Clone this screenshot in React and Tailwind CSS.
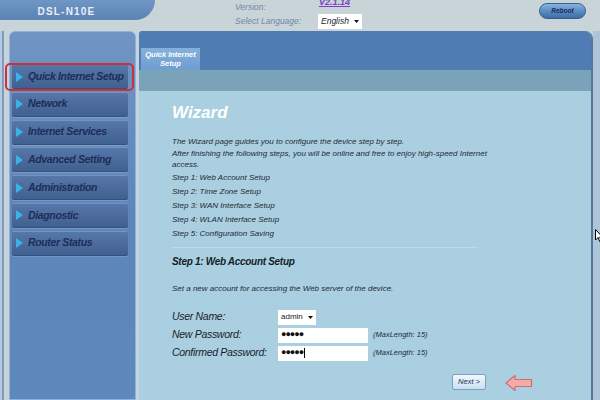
import React from "react";

const F = { fontFamily: '"Liberation Sans", Arial, sans-serif' };

function Arrow() {
  return (
    <svg width="7" height="10" viewBox="0 0 7 10" className="shrink-0">
      <path d="M0 0 L7 5 L0 10 Z" fill="#3bb3e6" />
    </svg>
  );
}

function MenuItem({ label }) {
  return (
    <div className="h-[25px] flex items-center gap-[5px] pl-[4px] rounded-[2px] bg-gradient-to-b from-[#5677a9] to-[#40608f] border-t border-[#7393c2] border-b border-b-[#34507c] shadow-[0_1px_0_rgba(255,255,255,0.15)]">
      <Arrow />
      <span className="text-[10.5px] tracking-[-0.35px] font-bold italic text-[#1d2d58] whitespace-nowrap">{label}</span>
    </div>
  );
}

function Caret() {
  return (
    <svg width="5" height="3" viewBox="0 0 5 3"><path d="M0 0 H5 L2.5 3 Z" fill="#111" /></svg>
  );
}

export default function App() {
  const menu = [
    "Quick Internet Setup",
    "Network",
    "Internet Services",
    "Advanced Setting",
    "Administration",
    "Diagnostic",
    "Router Status",
  ];
  const steps = [
    "Step 1: Web Account Setup",
    "Step 2: Time Zone Setup",
    "Step 3: WAN Interface Setup",
    "Step 4: WLAN Interface Setup",
    "Step 5: Configuration Saving",
  ];
  return (
    <div style={F} className="w-[600px] h-[400px] overflow-hidden bg-[#c9d4d9] flex flex-col">
      {/* header */}
      <div className="h-[31px] flex shrink-0">
        <div className="w-[155px] h-[20px] bg-gradient-to-b from-[#6f96c4] to-[#5a82b5] rounded-br-[26px] flex items-center justify-center pr-[22px] pt-[3px]">
          <span className="text-[10px] font-bold text-[#e9eef5] tracking-[1.2px]">DSL-N10E</span>
        </div>
        <div className="ml-[80px] flex flex-col">
          <div className="flex h-[13px] items-start">
            <span className="text-[8.5px] italic text-[#7087aa] w-[84px] mt-[1px]">Version:</span>
            <span className="text-[9px] font-bold italic text-[#7b3fc0] underline -mt-[4px]">V2.1.14</span>
          </div>
          <div className="flex items-center h-[16px]">
            <span className="text-[8.5px] italic text-[#7087aa] w-[83px]">Select Language:</span>
            <div className="w-[44px] h-[15px] bg-white flex items-center justify-between px-[3px]">
              <span className="text-[8.5px] italic text-[#222]">English</span>
              <Caret />
            </div>
          </div>
        </div>
        <div className="ml-auto mr-[14px] mt-[3px] w-[47px] h-[16px] rounded-full bg-gradient-to-b from-[#8ab4e0] via-[#5b8cc4] to-[#3e6ea6] border border-[#38608f] flex items-center justify-center">
          <span className="text-[6.5px] font-bold italic text-[#1b2c50]">Reboot</span>
        </div>
      </div>

      {/* body */}
      <div className="flex-1 flex min-h-0">
        <div className="w-[9px] shrink-0 flex">
          <div className="w-[2px] bg-[#b8c9dc]" />
          <div className="w-[2px] bg-[#7b9cc4]" />
        </div>

        {/* sidebar */}
        <div className="w-[127px] shrink-0 rounded-t-[6px] border border-[#92b1d6] bg-gradient-to-b from-[#7095c4] via-[#5d86ba] to-[#5e89bc] pt-[32px] pl-[2px] pr-[7px] relative">
          <div className="flex flex-col gap-[2.8px]">
            {menu.map((m) => (
              <MenuItem key={m} label={m} />
            ))}
          </div>
          <div className="absolute left-[-5px] top-[31px] w-[129px] h-[28px] rounded-[5px] border-2 border-[#c8303c]" />
        </div>

        <div className="w-[3px] shrink-0 bg-[#c3d3df]" />

        {/* main */}
        <div className="w-[454px] shrink-0 flex flex-col rounded-tr-[8px] rounded-tl-[3px] overflow-hidden border-r-2 border-[#54779f]">
          <div className="h-[39px] bg-[#4f7cb3] flex items-end pl-[2px] shrink-0">
            <div className="w-[59px] h-[22px] bg-gradient-to-b from-[#86b0dc] to-[#6e9dcf] flex flex-col items-center justify-center leading-[9px]">
              <span className="text-[7.5px] font-bold italic text-white">Quick Internet</span>
              <span className="text-[7.5px] font-bold italic text-white">Setup</span>
            </div>
          </div>
          <div className="h-[21px] bg-[#7aa2b9] shrink-0" />
          <div className="flex-1 bg-[#a9cfe0] pl-[33px] pt-[12px]">
            <div className="text-[17px] leading-[20px] font-bold italic text-white">Wizard</div>
            <div className="mt-[13px] w-[316px] text-[8px] leading-[11.5px] italic text-[#1f2a35]">
              The Wizard page guides you to configure the device step by step.
              <br />
              After finishing the following steps, you will be online and free to enjoy high-speed Internet access.
            </div>
            <div className="text-[8px] leading-[14px] italic text-[#1f2a35]">
              {steps.map((s) => (
                <div key={s}>{s}</div>
              ))}
            </div>
            <div className="mt-[6px] h-[1px] bg-[#c5d7df] w-[306px]" />
            <div className="mt-[7px] text-[10px] tracking-[-0.3px] leading-[14px] font-bold italic text-[#151d28]">Step 1: Web Account Setup</div>
            <div className="mt-[14px] text-[8px] leading-[12px] italic text-[#1f2a35]">Set a new account for accessing the Web server of the device.</div>

            <div className="mt-[15px] flex flex-col gap-[3px]">
              <div className="flex items-center h-[15px]">
                <span className="w-[106px] text-[10.5px] tracking-[-0.3px] italic text-[#1a222c]">User Name:</span>
                <div className="w-[38px] h-[15px] bg-white flex items-center justify-between px-[3px]">
                  <span className="text-[8px] text-[#222]">admin</span>
                  <Caret />
                </div>
              </div>
              <div className="flex items-center h-[15px]">
                <span className="w-[106px] text-[10.5px] tracking-[-0.3px] italic text-[#1a222c]">New Password:</span>
                <div className="w-[90px] h-[15px] bg-white flex items-center px-[3px]">
                  <span className="text-[9px] tracking-[-1px] text-[#111]">●●●●●</span>
                </div>
                <span className="ml-[5px] text-[7.5px] italic text-[#1f2a35]">(MaxLength: 15)</span>
              </div>
              <div className="flex items-center h-[15px]">
                <span className="w-[106px] text-[10.5px] tracking-[-0.3px] italic text-[#1a222c]">Confirmed Password:</span>
                <div className="w-[90px] h-[15px] bg-white flex items-center px-[3px]">
                  <span className="text-[9px] tracking-[-1px] text-[#111]">●●●●●</span>
                  <span className="ml-[1px] w-[1px] h-[10px] bg-black" />
                </div>
                <span className="ml-[5px] text-[7.5px] italic text-[#1f2a35]">(MaxLength: 15)</span>
              </div>
            </div>

            <div className="mt-[11px] flex items-center">
              <div className="ml-[280px] shrink-0 w-[34px] h-[16px] rounded-[2px] border border-[#7e9fbd] bg-gradient-to-b from-[#f2f8fc] to-[#c7e1f2] flex items-center justify-center">
                <span className="text-[7.5px] italic text-[#1f2f55] whitespace-nowrap">Next &gt;</span>
              </div>
              <svg width="28" height="18" viewBox="0 0 28 18" className="ml-[19px] mt-[2px] shrink-0">
                <path d="M1 9 L10 1.5 L10 5.5 L26.5 5.5 L26.5 12.5 L10 12.5 L10 16.5 Z" fill="#f5aaa8" stroke="#c77373" strokeWidth="1.2" strokeLinejoin="round" />
              </svg>
            </div>
          </div>
        </div>

        {/* right strip */}
        <div className="w-[7px] shrink-0 bg-[#aec5d8] relative">
          <svg width="8" height="14" viewBox="0 0 8 14" className="absolute left-[2px] top-[198px]">
            <path d="M0.5 0.5 L0.5 11 L3 8.5 L5 13 L6.5 12.3 L4.6 8 L7.5 8 Z" fill="white" stroke="black" strokeWidth="1" />
          </svg>
        </div>
      </div>
    </div>
  );
}
